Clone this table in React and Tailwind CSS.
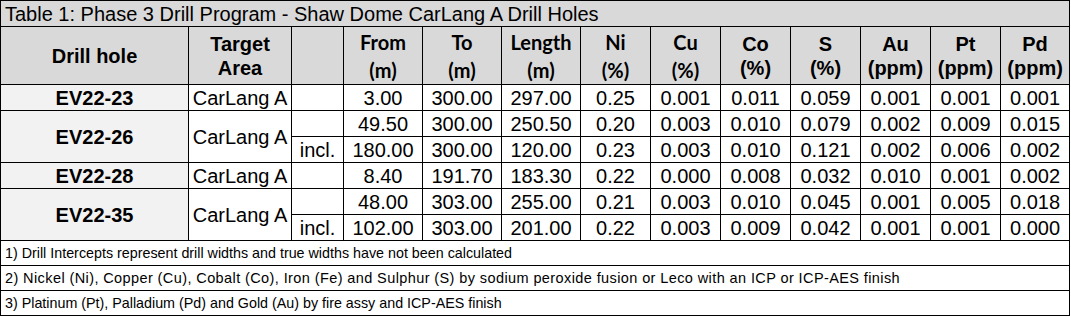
const widths = [188, 103, 52, 79, 79, 79, 70, 70, 70, 70, 70, 70, 69];

const headers = [
  { top: "Drill hole", arial: true },
  { top: "Target", bottom: "Area", arial: true },
  { top: "" },
  { top: "From", bottom: "(m)" },
  { top: "To", bottom: "(m)" },
  { top: "Length", bottom: "(m)" },
  { top: "Ni", bottom: "(%)" },
  { top: "Cu", bottom: "(%)" },
  { top: "Co", bottom: "(%)", arial: true },
  { top: "S", bottom: "(%)", arial: true },
  { top: "Au", bottom: "(ppm)", arial: true },
  { top: "Pt", bottom: "(ppm)", arial: true },
  { top: "Pd", bottom: "(ppm)", arial: true },
];

const holes = [
  {
    id: "EV22-23",
    rows: [["", "3.00", "300.00", "297.00", "0.25", "0.001", "0.011", "0.059", "0.001", "0.001", "0.001"]],
  },
  {
    id: "EV22-26",
    rows: [
      ["", "49.50", "300.00", "250.50", "0.20", "0.003", "0.010", "0.079", "0.002", "0.009", "0.015"],
      ["incl.", "180.00", "300.00", "120.00", "0.23", "0.003", "0.010", "0.121", "0.002", "0.006", "0.002"],
    ],
  },
  {
    id: "EV22-28",
    rows: [["", "8.40", "191.70", "183.30", "0.22", "0.000", "0.008", "0.032", "0.010", "0.001", "0.002"]],
  },
  {
    id: "EV22-35",
    rows: [
      ["", "48.00", "303.00", "255.00", "0.21", "0.003", "0.010", "0.045", "0.001", "0.005", "0.018"],
      ["incl.", "102.00", "303.00", "201.00", "0.22", "0.003", "0.009", "0.042", "0.001", "0.001", "0.000"],
    ],
  },
];

const notes = [
  {
    text: "1) Drill Intercepts represent drill widths and true widths have not been calculated",
    cls: "text-[14.3px]",
  },
  {
    text: "2) Nickel (Ni), Copper (Cu), Cobalt (Co), Iron (Fe) and Sulphur (S) by sodium peroxide fusion or Leco with an ICP or ICP-AES finish",
    cls: "text-[14.5px] tracking-[0.4px]",
  },
  {
    text: "3) Platinum (Pt), Palladium (Pd) and Gold (Au) by fire assy and ICP-AES finish",
    cls: "text-[14.3px]",
  },
];

const cell = "border border-black p-0 text-center align-middle";

export default function App() {
  return (
    <div className="bg-white w-[1071px] h-[317px] font-['Liberation_Sans',Arial,sans-serif] text-black">
      <table className="table-fixed border-collapse w-[1069px]">
        <colgroup>
          {widths.map((w, i) => (
            <col key={i} style={{ width: w }} />
          ))}
        </colgroup>
        <tbody>
          {/* Title */}
          <tr className="h-[26px]">
            <td colSpan={13} className="border border-black bg-[#d9d9d9] px-[4px] text-[20px] leading-[24px] text-left">
              Table 1: Phase 3 Drill Program - Shaw Dome CarLang A Drill Holes
            </td>
          </tr>

          {/* Column headers */}
          <tr className="h-[58px]">
            {headers.map((h, i) => (
              <td
                key={i}
                className={`${cell} bg-[#d9d9d9] font-bold ${
                  h.arial
                    ? "text-[20px] leading-[24px]"
                    : "font-['Lato',sans-serif] text-[20px] leading-[28px]"
                }`}
              >
                <div>{h.top}</div>
                {h.bottom && <div>{h.bottom}</div>}
              </td>
            ))}
          </tr>

          {/* Data */}
          {holes.map((hole) =>
            hole.rows.map((r, ri) => (
              <tr key={hole.id + ri} className="h-[26px] text-[20px] leading-[22px]">
                {ri === 0 && (
                  <>
                    <td rowSpan={hole.rows.length} className={`${cell} bg-[#f2f2f2] font-bold`}>
                      {hole.id}
                    </td>
                    <td rowSpan={hole.rows.length} className={`${cell} whitespace-nowrap`}>
                      CarLang A
                    </td>
                  </>
                )}
                {r.map((v, vi) => (
                  <td key={vi} className={cell}>
                    {v}
                  </td>
                ))}
              </tr>
            ))
          )}

          {/* Notes */}
          {notes.map((n, i) => (
            <tr key={i} className="h-[25px]">
              <td colSpan={13} className={`border border-black px-[4px] leading-[20px] text-left ${n.cls}`}>
                {n.text}
              </td>
            </tr>
          ))}
        </tbody>
      </table>
    </div>
  );
}
